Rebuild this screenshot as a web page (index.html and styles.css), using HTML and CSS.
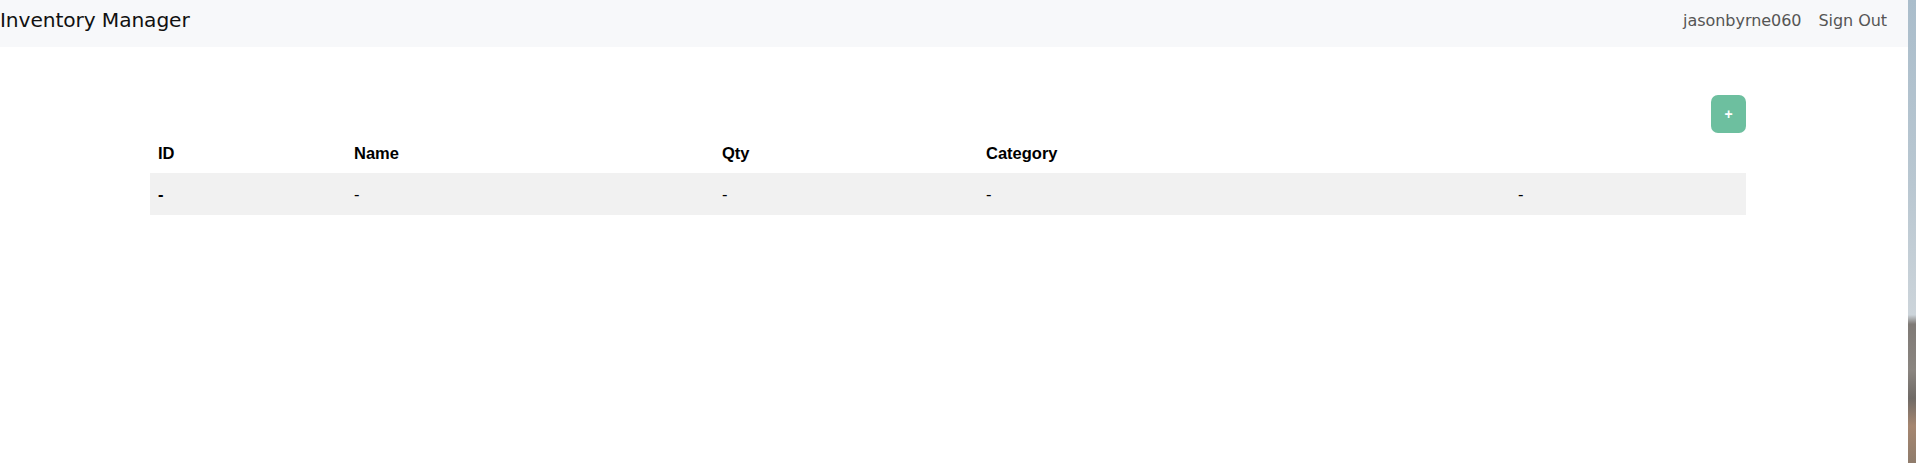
FILE: index.html
```html
<!DOCTYPE html>
<html lang="en">
<head>
<meta charset="utf-8">
<title>Inventory Manager</title>
<link rel="stylesheet" href="styles.css">
</head>
<body>
<div class="app">
  <header class="navbar">
    <span class="brand">Inventory Manager</span>
    <nav class="nav-right">
      <span class="nav-item">jasonbyrne060</span>
      <span class="nav-item">Sign Out</span>
    </nav>
  </header>
  <main class="content">
    <div class="toolbar">
      <button class="add-btn" type="button">+</button>
    </div>
    <table class="inv-table">
      <colgroup>
        <col class="c-id"><col class="c-name"><col class="c-qty"><col class="c-cat"><col class="c-act">
      </colgroup>
      <thead>
        <tr><th>ID</th><th>Name</th><th>Qty</th><th>Category</th><th></th></tr>
      </thead>
      <tbody>
        <tr class="striped"><th>-</th><td>-</td><td>-</td><td>-</td><td>-</td></tr>
      </tbody>
    </table>
  </main>
</div>
<div class="side-strip"></div>
</body>
</html>
```

FILE: styles.css
```css
html, body {
  margin: 0;
  padding: 0;
  height: 100%;
  background: #ffffff;
}
body {
  display: flex;
  overflow: hidden;
}
.app {
  flex: 1;
  min-width: 0;
}
.navbar {
  height: 47px;
  box-sizing: border-box;
  background: #f7f8fa;
  display: flex;
  align-items: center;
  justify-content: space-between;
  padding: 0 21px 7px 0;
  font-family: "DejaVu Sans", "Open Sans", sans-serif;
}
.brand {
  font-size: 20.2px;
  color: #111;
  letter-spacing: -0.1px;
}
.nav-right {
  display: flex;
  gap: 17px;
}
.nav-item {
  font-size: 16px;
  color: #555;
  letter-spacing: -0.05px;
}
.content {
  padding: 48px 162px 0 150px;
}
.toolbar {
  display: flex;
  justify-content: flex-end;
}
.add-btn {
  width: 35px;
  height: 38px;
  border: none;
  border-radius: 7px;
  background: #6dbf9f;
  color: #fff;
  font-family: "Liberation Sans", Arial, sans-serif;
  font-size: 14px;
  font-weight: bold;
  padding: 0;
  cursor: pointer;
}
.inv-table {
  width: 100%;
  border-collapse: collapse;
  table-layout: fixed;
  font-family: "Liberation Sans", Arial, sans-serif;
  font-size: 16.5px;
  color: #000;
}
.c-id { width: 196px; }
.c-name { width: 368px; }
.c-qty { width: 264px; }
.c-cat { width: 532px; }
.inv-table th, .inv-table td {
  text-align: left;
  padding: 0 8px;
}
.inv-table thead tr { height: 40px; }
.inv-table tbody tr { height: 42px; }
.inv-table th { font-weight: bold; }
.inv-table td { font-weight: normal; }
.striped { background: #f1f1f1; }
.side-strip {
  width: 8px;
  flex: none;
  height: 100%;
  background: linear-gradient(to bottom, #aabdcb 0%, #b9c7d1 40%, #ccd4da 68%, #7f7a76 70%, #8a8580 80%, #6f6a66 86%, #a58670 92%, #8f7c6c 100%);
}
```
